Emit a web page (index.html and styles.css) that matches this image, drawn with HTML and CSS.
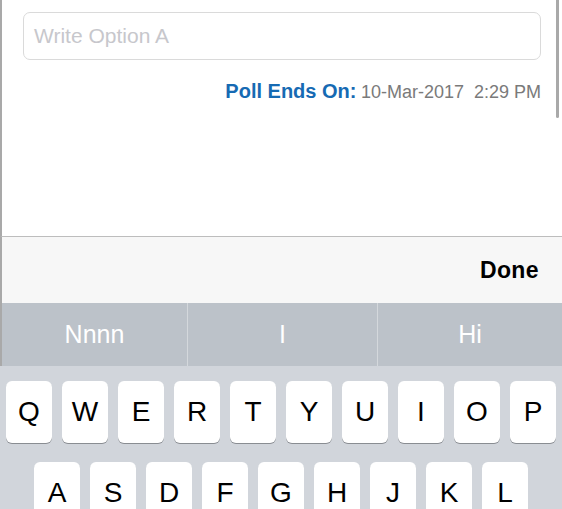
FILE: index.html
```html
<!DOCTYPE html>
<html>
<head>
<meta charset="utf-8">
<link rel="stylesheet" href="styles.css">
</head>
<body>
<div class="screen">
  <div class="content">
    <div class="option-input">Write Option A</div>
    <div class="poll-ends"><span class="poll-label">Poll Ends On:</span> <span class="poll-date">10-Mar-2017&nbsp; 2:29 PM</span></div>
    <div class="scroll-indicator"></div>
  </div>
  <div class="toolbar"><span class="done">Done</span></div>
  <div class="suggestions">
    <div class="suggestion">Nnnn</div>
    <div class="suggestion">I</div>
    <div class="suggestion">Hi</div>
  </div>
  <div class="keyboard">
    <div class="key-row">
      <div class="key">Q</div><div class="key">W</div><div class="key">E</div><div class="key">R</div><div class="key">T</div><div class="key">Y</div><div class="key">U</div><div class="key">I</div><div class="key">O</div><div class="key">P</div>
    </div>
    <div class="key-row row-2">
      <div class="key">A</div><div class="key">S</div><div class="key">D</div><div class="key">F</div><div class="key">G</div><div class="key">H</div><div class="key">J</div><div class="key">K</div><div class="key">L</div>
    </div>
  </div>
</div>
</body>
</html>
```
FILE: styles.css
```css
html, body {
  margin: 0;
  padding: 0;
  background: #ffffff;
}
body {
  width: 562px;
  height: 509px;
  overflow: hidden;
  font-family: "Liberation Sans", Arial, sans-serif;
}
.screen {
  display: flex;
  flex-direction: column;
  height: 509px;
}
.screen > * {
  flex: none;
}
.content {
  position: relative;
  background: #ffffff;
  border-left: 2px solid #a9a9a9;
  border-bottom: 1px solid #bdbdbd;
  box-sizing: border-box;
  height: 237px;
  padding-top: 12px;
}
.option-input {
  margin: 0 21px 0 21px;
  height: 48px;
  box-sizing: border-box;
  border: 1px solid #dadada;
  border-radius: 7px;
  padding-left: 10px;
  display: flex;
  align-items: center;
  font-size: 21px;
  color: #c7c7cc;
}
.poll-ends {
  margin: 20px 21px 0 0;
  text-align: right;
  line-height: 22px;
  white-space: nowrap;
}
.poll-label {
  color: #166ab3;
  font-weight: bold;
  font-size: 20px;
}
.poll-date {
  color: #7a7a7a;
  font-size: 18px;
}
.scroll-indicator {
  position: absolute;
  right: 3px;
  top: 0;
  width: 3px;
  height: 118px;
  border-radius: 0 0 2px 2px;
  background: #a9a9a9;
}
.toolbar {
  height: 66px;
  background: #f7f7f7;
  border-left: 2px solid #a9a9a9;
  display: flex;
  align-items: center;
  justify-content: flex-end;
  padding-right: 23px;
}
.done {
  font-size: 23px;
  font-weight: bold;
  color: #000000;
  letter-spacing: 0.4px;
}
.suggestions {
  height: 63px;
  background: #bcc2c9;
  border-left: 2px solid #a9a9a9;
  display: grid;
  grid-template-columns: 185px 1fr 185px;
}
.suggestion {
  display: flex;
  align-items: center;
  justify-content: center;
  color: #ffffff;
  font-size: 25px;
}
.suggestion + .suggestion {
  border-left: 1px solid #d4d8dc;
}
.keyboard {
  flex: 1 1 auto !important;
  background: #d1d5db;
  padding: 15px 0 0 6px;
  display: flex;
  flex-direction: column;
  gap: 19px;
}
.key-row {
  display: flex;
  gap: 10px;
}
.row-2 {
  padding-left: 28px;
}
.key {
  width: 46px;
  height: 62px;
  flex: none;
  background: #ffffff;
  border-radius: 6px;
  box-shadow: 0 1px 0 #898d92;
  display: flex;
  align-items: center;
  justify-content: center;
  font-size: 28px;
  color: #000000;
}
```
